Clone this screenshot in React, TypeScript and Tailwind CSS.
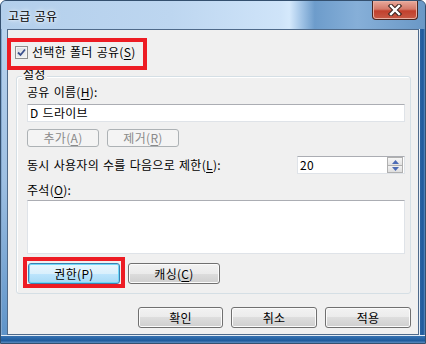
import React from "react";

const U = ({ children }: { children: React.ReactNode }) => (
  <span className="underline decoration-1 underline-offset-[2px]">{children}</span>
);

function Btn({
  children,
  className = "",
  disabled = false,
  focused = false,
}: {
  children: React.ReactNode;
  className?: string;
  disabled?: boolean;
  focused?: boolean;
}) {
  const base =
    "flex items-center justify-center rounded-[3px] border leading-[14px] ";
  if (disabled)
    return (
      <div
        className={
          base +
          "border-[#adb2b5] bg-[#f4f4f4] text-[#8a8a8a] " +
          className
        }
      >
        {children}
      </div>
    );
  if (focused)
    return (
      <div
        className={
          base +
          "border-[#3c7fb1] bg-[linear-gradient(to_bottom,#eaf6fd_0%,#d9f0fc_50%,#bee6fd_50%,#a7d9f5_100%)] shadow-[inset_0_0_0_1px_#6fd8f8] " +
          className
        }
      >
        {children}
      </div>
    );
  return (
    <div
      className={
        base +
        "border-[#707070] bg-[linear-gradient(to_bottom,#f2f2f2_0%,#ebebeb_50%,#dddddd_50%,#cfcfcf_100%)] shadow-[inset_0_0_0_1px_#fbfbfb] " +
        className
      }
    >
      {children}
    </div>
  );
}

const TextBox = ({ className = "", children }: { className?: string; children?: React.ReactNode }) => (
  <div
    className={
      "border border-[#dfe3e8] border-t-[#abadb3] bg-white " + className
    }
  >
    {children}
  </div>
);

export default function App() {
  return (
    <div
      className="relative h-[344px] w-[426px] overflow-hidden bg-white text-[12px] tracking-[0.3px] text-black [word-spacing:1px]"
      style={{ fontFamily: '"Noto Sans CJK KR", "Noto Sans", sans-serif' }}
    >
      <div className="flex h-[344px] w-[426px] flex-col rounded-t-[6px] border border-[#34506f] bg-[#5d8fc3]">
        {/* title bar */}
        <div className="flex h-[28px] items-start rounded-t-[5px] bg-[linear-gradient(to_right,#b3cfeb_0%,#bdd6f0_40%,#cfe4f9_66%,#d5e9fc_68%,#9fc2e5_71%,#6d9ccb_74%,#86afd8_84%,#6a98c6_100%)] pl-[7px] pr-[7px]">
          <div className="mt-[7px] leading-[16px] text-[12px] text-black [text-shadow:0_0_6px_#ffffff,0_0_3px_#ffffff]">
            고급 공유
          </div>
          <div className="ml-auto flex h-[19px] w-[46px] items-center justify-center rounded-b-[4px] border border-t-0 border-[#4b2620] bg-[linear-gradient(to_bottom,#e9a99b_0%,#d47a6a_45%,#c1402d_55%,#c65a46_100%)] shadow-[inset_0_0_0_1px_#e8b0a3]">
            <svg width="16" height="12" viewBox="0 0 16 12">
              <path d="M4 2 L12 10 M12 2 L4 10" stroke="#3b2520" strokeWidth="4.5" strokeLinecap="square" />
              <path d="M4 2 L12 10 M12 2 L4 10" stroke="#ffffff" strokeWidth="2.4" strokeLinecap="square" />
            </svg>
          </div>
        </div>

        {/* middle */}
        <div className="flex flex-1">
          <div className="w-[6px] bg-[linear-gradient(to_bottom,#b9d3ee_0%,#9dbfe2_50%,#5f94c9_100%)] shadow-[inset_1px_0_0_#86a9cf]" />
          <div className="flex flex-1 flex-col border border-[#4f6a8a] bg-[#f0f0f0]">
            {/* checkbox row */}
            <div className="mt-[15px] flex h-[14px] items-center pl-[7px] leading-[14px]">
              <div className="flex h-[13px] w-[13px] items-center justify-center border border-[#8e8f8f] bg-[linear-gradient(135deg,#d8dbe0_0%,#f4f4f4_100%)] shadow-[inset_0_0_0_1px_#f4f4f4]">
                <svg width="9" height="9" viewBox="0 0 9 9">
                  <path d="M1 4.5 L3.5 7 L8 1.5" fill="none" stroke="#3a4f8c" strokeWidth="1.8" />
                </svg>
              </div>
              <span className="ml-[4px]">
                선택한 폴더 공유(<U>S</U>)
              </span>
            </div>

            {/* group box */}
            <div className="relative ml-[8px] mr-[7px] mt-[17px] flex flex-col rounded-[3px] border border-[#d5dfe5] pb-[9px] pl-[10px] pr-[5px] shadow-[inset_1px_1px_0_#ffffff]">
              <span className="absolute left-[5px] top-[-9px] bg-[#f0f0f0] px-[1px] leading-[12px]">
                설정
              </span>
              <div className="mt-[8px] leading-[14px]">
                공유 이름(<U>H</U>):
              </div>
              <TextBox className="mt-[5px] flex h-[18px] items-center pl-[2px] leading-[14px]">
                D 드라이브
              </TextBox>
              <div className="mt-[7px] flex gap-[8px]">
                <Btn disabled className="h-[18px] w-[72px]">
                  추가(<U>A</U>)
                </Btn>
                <Btn disabled className="h-[18px] w-[72px]">
                  제거(<U>R</U>)
                </Btn>
              </div>
              <div className="mt-[9px] flex h-[18px] items-center justify-between leading-[14px]">
                <span>
                  동시 사용자의 수를 다음으로 제한(<U>L</U>):
                </span>
                <TextBox className="flex h-[18px] w-[108px] items-center justify-between pl-[2px]">
                  <span className="leading-[14px]">20</span>
                  <div className="mr-[1px] flex h-[16px] w-[16px] flex-col">
                    <div className="flex h-[8px] items-center justify-center border border-b-0 border-[#b0b0b0] bg-[linear-gradient(to_bottom,#f6f6f6,#e2e2e2)]">
                      <svg width="7" height="4" viewBox="0 0 7 4">
                        <path d="M0 4 L3.5 0 L7 4 Z" fill="#4c6bb5" />
                      </svg>
                    </div>
                    <div className="flex h-[8px] items-center justify-center border border-[#b0b0b0] bg-[linear-gradient(to_bottom,#f2f2f2,#dedede)]">
                      <svg width="7" height="4" viewBox="0 0 7 4">
                        <path d="M0 0 L3.5 4 L7 0 Z" fill="#4c6bb5" />
                      </svg>
                    </div>
                  </div>
                </TextBox>
              </div>
              <div className="mt-[9px] leading-[14px]">
                주석(<U>O</U>):
              </div>
              <TextBox className="mt-[3px] h-[54px]" />
              <div className="mt-[9px] flex gap-[8px] pl-[1px]">
                <Btn focused className="h-[21px] w-[92px]">
                  권한(P)
                </Btn>
                <Btn className="h-[21px] w-[92px]">
                  캐싱(<U>C</U>)
                </Btn>
              </div>
            </div>

            {/* bottom buttons */}
            <div className="mt-auto flex justify-end gap-[8px] pb-[6px] pr-[7px]">
              <Btn className="h-[21px] w-[85px]">확인</Btn>
              <Btn className="h-[21px] w-[86px]">취소</Btn>
              <Btn className="h-[21px] w-[86px]">적용</Btn>
            </div>
          </div>
          <div className="w-[6px] bg-[linear-gradient(to_right,#e6eef7_0%,#e6eef7_15%,#2a63a2_20%,#1f5a9c_70%,#5f8fc2_100%)]" />
        </div>
        <div className="h-[8px] bg-[linear-gradient(to_bottom,#e3ecf6_0%,#e3ecf6_12%,#3571b1_16%,#1f5b9d_70%,#5b8cc0_100%)]" />
      </div>

      {/* red annotation boxes */}
      <div className="pointer-events-none absolute left-[7px] top-[38px] h-[32px] w-[140px] border-[4px] border-[#ed1c24]" />
      <div className="pointer-events-none absolute left-[23px] top-[257px] h-[31px] w-[102px] border-[4px] border-[#ed1c24]" />
    </div>
  );
}
